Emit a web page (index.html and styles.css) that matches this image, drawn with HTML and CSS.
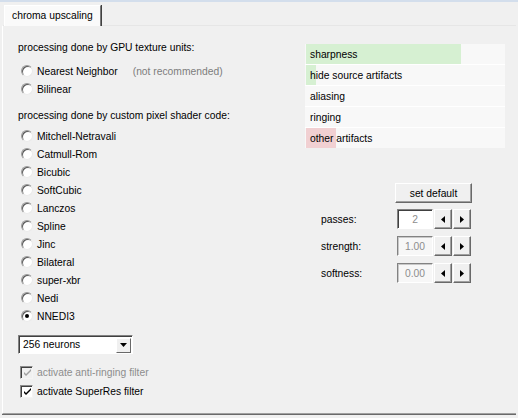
FILE: index.html
```html
<!DOCTYPE html>
<html>
<head>
<meta charset="utf-8">
<title>chroma upscaling</title>
<link rel="stylesheet" href="styles.css">
</head>
<body>
<div class="window">
  <div class="tabstrip">
    <div class="tab">chroma upscaling</div>
  </div>
  <div class="panel">
    <div class="left">
      <div class="heading first">processing done by GPU texture units:</div>
      <label class="opt"><span class="radio"></span><span>Nearest Neighbor</span><span class="note">(not recommended)</span></label>
      <label class="opt"><span class="radio"></span><span>Bilinear</span></label>

      <div class="heading second">processing done by custom pixel shader code:</div>
      <label class="opt"><span class="radio"></span><span>Mitchell-Netravali</span></label>
      <label class="opt"><span class="radio"></span><span>Catmull-Rom</span></label>
      <label class="opt"><span class="radio"></span><span>Bicubic</span></label>
      <label class="opt"><span class="radio"></span><span>SoftCubic</span></label>
      <label class="opt"><span class="radio"></span><span>Lanczos</span></label>
      <label class="opt"><span class="radio"></span><span>Spline</span></label>
      <label class="opt"><span class="radio"></span><span>Jinc</span></label>
      <label class="opt"><span class="radio"></span><span>Bilateral</span></label>
      <label class="opt"><span class="radio"></span><span>super-xbr</span></label>
      <label class="opt"><span class="radio"></span><span>Nedi</span></label>
      <label class="opt"><span class="radio checked"></span><span>NNEDI3</span></label>

      <div class="combo">
        <span class="combo-text">256 neurons</span>
        <span class="combo-btn"><svg width="7" height="4" viewBox="0 0 7 4"><path d="M0 0h7L3.5 4z" fill="#000"/></svg></span>
      </div>

      <label class="opt check disabled"><span class="box"><svg width="9" height="9" viewBox="0 0 9 9"><path d="M1 4l2 2 5-5v2L3 8 1 6z" fill="#a0a0a0"/></svg></span><span>activate anti-ringing filter</span></label>
      <label class="opt check"><span class="box"><svg width="9" height="9" viewBox="0 0 9 9"><path d="M1 4l2 2 5-5v2L3 8 1 6z" fill="#000"/></svg></span><span>activate SuperRes filter</span></label>
    </div>

    <div class="right">
      <div class="ratings">
        <div class="row"><span class="bar good" style="width:155px"></span><span class="rtext">sharpness</span></div>
        <div class="row"><span class="bar good" style="width:10px"></span><span class="rtext">hide source artifacts</span></div>
        <div class="row"><span class="rtext">aliasing</span></div>
        <div class="row"><span class="rtext">ringing</span></div>
        <div class="row"><span class="bar bad" style="width:30px"></span><span class="rtext">other artifacts</span></div>
      </div>

      <div class="controls">
        <div class="btn-row"><button class="btn">set default</button></div>
        <div class="spin">
          <span class="slabel">passes:</span>
          <span class="field enabled">2</span>
          <span class="arrow"><svg width="4" height="7" viewBox="0 0 4 7"><path d="M4 0v7L0 3.5z" fill="#000"/></svg></span>
          <span class="arrow"><svg width="4" height="7" viewBox="0 0 4 7"><path d="M0 0v7l4-3.5z" fill="#000"/></svg></span>
        </div>
        <div class="spin">
          <span class="slabel">strength:</span>
          <span class="field">1.00</span>
          <span class="arrow"><svg width="4" height="7" viewBox="0 0 4 7"><path d="M4 0v7L0 3.5z" fill="#000"/></svg></span>
          <span class="arrow"><svg width="4" height="7" viewBox="0 0 4 7"><path d="M0 0v7l4-3.5z" fill="#000"/></svg></span>
        </div>
        <div class="spin">
          <span class="slabel">softness:</span>
          <span class="field">0.00</span>
          <span class="arrow"><svg width="4" height="7" viewBox="0 0 4 7"><path d="M4 0v7L0 3.5z" fill="#000"/></svg></span>
          <span class="arrow"><svg width="4" height="7" viewBox="0 0 4 7"><path d="M0 0v7l4-3.5z" fill="#000"/></svg></span>
        </div>
      </div>
    </div>
  </div>
</div>
</body>
</html>
```

FILE: styles.css
```css
html, body {
  margin: 0;
  padding: 0;
}

body {
  width: 518px;
  height: 418px;
  overflow: hidden;
  background: #f0f0f0;
  font-family: "Liberation Sans", Arial, sans-serif;
  font-size: 10.3px;
  color: #000;
}

.window {
  border-top: 2px solid #d3deec;
  height: 416px;
  display: flex;
  flex-direction: column;
}

/* tab header */
.tabstrip {
  height: 23px;
  padding-left: 4px;
  display: flex;
  align-items: flex-end;
}

.tab {
  height: 21px;
  width: 97px;
  box-sizing: border-box;
  background: #fafafa;
  border-left: 1px solid #fff;
  border-top: 1px solid #fff;
  border-right: 1px solid #7a7a7a;
  box-shadow: 1px 0 0 #404040;
  padding-left: 7px;
  line-height: 20px;
  white-space: nowrap;
  position: relative;
  z-index: 1;
  margin-bottom: -1px;
}

/* tab page */
.panel {
  flex: 1;
  margin-left: 2px;
  margin-right: 2px;
  margin-bottom: 4px;
  border-top: 1px solid #e6e6e6;
  border-left: 1px solid #fff;
  border-bottom: 1px solid #a0a0a0;
  box-shadow: 0 1px 0 #696969;
  display: flex;
}

.left {
  width: 302px;
  padding-left: 15px;
  padding-top: 15px;
  box-sizing: border-box;
}

.heading {
  height: 14px;
  line-height: 14px;
}

.heading.first { margin-bottom: 7px; }
.heading.second { margin-top: 11px; margin-bottom: 4px; }

.opt {
  display: flex;
  align-items: center;
  height: 18px;
  white-space: nowrap;
}

.radio {
  width: 12px;
  height: 12px;
  box-sizing: border-box;
  margin-left: 3px;
  margin-right: 4px;
  border-radius: 50%;
  background: #fff;
  border: 1px solid;
  border-color: #9a9a9a #eaeaea #eaeaea #9a9a9a;
  box-shadow: inset 1px 1px 0 #5a5a5a;
  position: relative;
}

.radio.checked::after {
  content: "";
  position: absolute;
  left: 3px;
  top: 3px;
  width: 4px;
  height: 4px;
  border-radius: 50%;
  background: #000;
}

.note {
  color: #7d7d7d;
  margin-left: 15px;
}

/* drop-down list */
.combo {
  margin-top: 10px;
  width: 115px;
  height: 19px;
  box-sizing: border-box;
  background: #fff;
  border: 1px solid;
  border-color: #828282 #fff #fff #828282;
  box-shadow: inset 1px 1px 0 #404040;
  display: flex;
  align-items: center;
  justify-content: space-between;
  padding-left: 4px;
  padding-right: 1px;
  margin-bottom: 9px;
}

.combo-btn {
  width: 15px;
  height: 15px;
  box-sizing: border-box;
  background: #f0f0f0;
  border: 1px solid;
  border-color: #fff #696969 #696969 #fff;
  display: flex;
  align-items: center;
  justify-content: center;
  margin-top: 1px;
}

/* check boxes */
.check .box {
  width: 13px;
  height: 13px;
  box-sizing: border-box;
  margin-left: 2px;
  margin-right: 4px;
  background: #fff;
  border: 1px solid;
  border-color: #8c8c8c #f4f4f4 #f4f4f4 #8c8c8c;
  box-shadow: inset 1px 1px 0 #404040;
  display: flex;
  align-items: center;
  justify-content: center;
  padding: 1px 0 0 1px;
}

.check.disabled { color: #8d8d8d; }
.check.disabled .box { background: #f0f0f0; }

.check + .check { margin-top: 1px; }

/* right column */
.right {
  padding-top: 18px;
  width: 200px;
}

.ratings {
  width: 200px;
  background: #fff;
  display: flex;
  flex-direction: column;
  gap: 1px;
}

.row {
  position: relative;
  height: 20px;
  background: #f8f8f8;
  display: flex;
  align-items: center;
}

.bar {
  position: absolute;
  left: 1px;
  top: 0;
  bottom: 0;
}

.bar.good { background: #d6f0d2; }
.bar.bad { background: #f1d0d2; }

.rtext {
  position: relative;
  padding-left: 5px;
}

.controls {
  margin-top: 35px;
  padding-left: 16px;
}

.btn-row {
  display: flex;
  padding-left: 74px;
  margin-bottom: 6px;
}

.btn {
  width: 77px;
  height: 20px;
  font: inherit;
  padding: 0;
  background: #f0f0f0;
  border: 1px solid;
  border-color: #fff #696969 #696969 #fff;
  box-shadow: inset -1px -1px 0 #a0a0a0;
  color: #000;
}

.spin {
  display: flex;
  align-items: center;
  height: 20px;
  margin-bottom: 7px;
}

.slabel {
  width: 76px;
}

.field {
  width: 36px;
  height: 20px;
  box-sizing: border-box;
  border: 1px solid;
  border-color: #828282 #fff #fff #828282;
  box-shadow: inset 1px 1px 0 #c8c8c8;
  background: #f7f7f7;
  color: #8d8d8d;
  display: flex;
  align-items: center;
  justify-content: center;
  margin-right: 1px;
}

.field.enabled { background: #fff; box-shadow: inset 1px 1px 0 #404040; }

.arrow {
  width: 18px;
  height: 20px;
  box-sizing: border-box;
  background: #f0f0f0;
  border: 1px solid;
  border-color: #fff #696969 #696969 #fff;
  box-shadow: inset -1px -1px 0 #a0a0a0;
  display: flex;
  align-items: center;
  justify-content: center;
  margin-right: 1px;
}
```
